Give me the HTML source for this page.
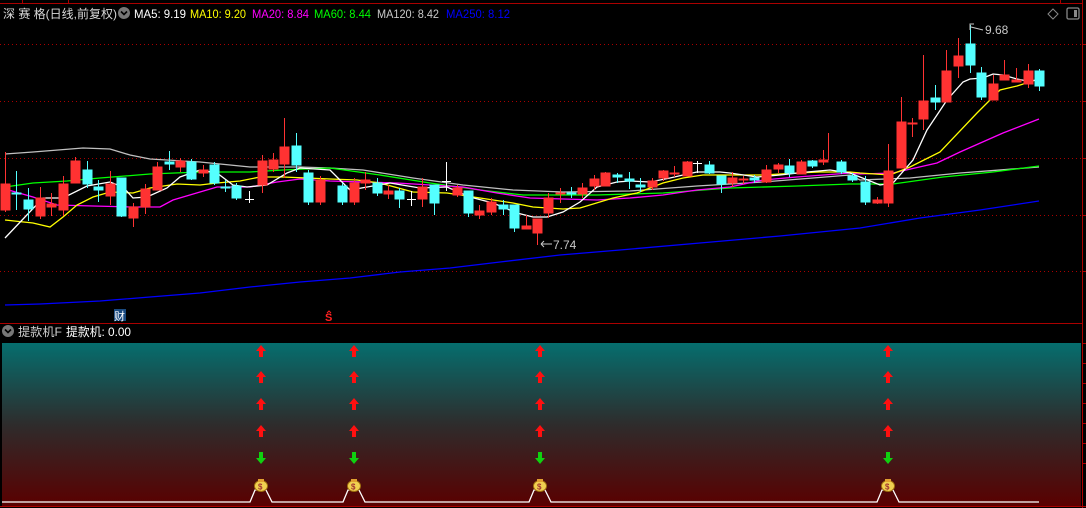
<!DOCTYPE html>
<html><head><meta charset="utf-8"><style>
html,body{margin:0;padding:0;background:#000;width:1086px;height:508px;overflow:hidden}
svg{display:block}
text{font-family:"Liberation Sans","Noto Sans CJK SC",sans-serif}
</style></head><body>
<svg width="1086" height="508" viewBox="0 0 1086 508" xmlns="http://www.w3.org/2000/svg">
<defs>
<linearGradient id="g" x1="0" y1="0" x2="0" y2="1">
<stop offset="0" stop-color="#056e6e"/>
<stop offset="0.5" stop-color="#2e2c2c"/>
<stop offset="1" stop-color="#5a0000"/>
</linearGradient>
</defs>
<rect width="1086" height="508" fill="#000"/>
<!-- frame -->
<line x1="0" y1="3.5" x2="1082" y2="3.5" stroke="#a00" stroke-width="1"/>
<line x1="22.5" y1="0" x2="22.5" y2="3" stroke="#a00"/>
<line x1="68.5" y1="0" x2="68.5" y2="3" stroke="#a00"/>
<line x1="1060.5" y1="0" x2="1060.5" y2="3" stroke="#a00"/>
<line x1="1082.5" y1="0" x2="1082.5" y2="508" stroke="#a00"/>
<line x1="0" y1="323.5" x2="1082" y2="323.5" stroke="#a00"/>
<line x1="0" y1="506.5" x2="1086" y2="506.5" stroke="#a00"/>
<g stroke="#a00" stroke-dasharray="1,3">
<line x1="0" y1="44.5" x2="1082" y2="44.5"/>
<line x1="0" y1="101.5" x2="1082" y2="101.5"/>
<line x1="0" y1="158.5" x2="1082" y2="158.5"/>
<line x1="0" y1="215.5" x2="1082" y2="215.5"/>
<line x1="0" y1="271.5" x2="1082" y2="271.5"/>
</g>
<g stroke="#a00">
<line x1="1082" y1="44.5" x2="1086" y2="44.5"/><line x1="1082" y1="101.5" x2="1086" y2="101.5"/><line x1="1082" y1="158.5" x2="1086" y2="158.5"/><line x1="1082" y1="215.5" x2="1086" y2="215.5"/><line x1="1082" y1="271.5" x2="1086" y2="271.5"/>
<line x1="1082" y1="343.5" x2="1086" y2="343.5"/><line x1="1082" y1="363.5" x2="1086" y2="363.5"/><line x1="1082" y1="383.5" x2="1086" y2="383.5"/><line x1="1082" y1="403.5" x2="1086" y2="403.5"/><line x1="1082" y1="423.5" x2="1086" y2="423.5"/><line x1="1082" y1="443.5" x2="1086" y2="443.5"/><line x1="1082" y1="463.5" x2="1086" y2="463.5"/>
</g>

<!-- header -->
<text x="3" y="18" font-size="12" fill="#d8d8d8" textLength="114" lengthAdjust="spacingAndGlyphs">深 赛 格(日线,前复权)</text>
<circle cx="124" cy="13" r="6" fill="#777"/>
<path d="M121 11.5 L124 14.5 L127 11.5" stroke="#000" stroke-width="1.6" fill="none"/>
<g font-size="12">
<text x="134" y="18" fill="#fff" textLength="52" lengthAdjust="spacingAndGlyphs">MA5: 9.19</text>
<text x="190" y="18" fill="#ffff00" textLength="56" lengthAdjust="spacingAndGlyphs">MA10: 9.20</text>
<text x="252" y="18" fill="#ff00ff" textLength="57" lengthAdjust="spacingAndGlyphs">MA20: 8.84</text>
<text x="314" y="18" fill="#00ff00" textLength="57" lengthAdjust="spacingAndGlyphs">MA60: 8.44</text>
<text x="377" y="18" fill="#c8c8c8" textLength="62" lengthAdjust="spacingAndGlyphs">MA120: 8.42</text>
<text x="446" y="18" fill="#0000ff" textLength="64" lengthAdjust="spacingAndGlyphs">MA250: 8.12</text>
</g>
<path d="M1053 9 L1058 14 L1053 19 L1048 14 Z" stroke="#888" fill="none"/>
<rect x="1067" y="8" width="12" height="11" rx="1.5" stroke="#888" fill="none" stroke-width="1.3"/>
<rect x="1074" y="10" width="3" height="7" fill="#888"/>

<!-- MA lines -->
<g fill="none" stroke-width="1.3">
<polyline stroke="#0000ff" points="5,305 40,304 100,301 150,297 200,293 250,287 300,282 350,278 400,272 450,268 500,262 560,255 620,250 700,243 780,236 860,228 920,218 980,210 1039,201"/>
<polyline stroke="#c0c0c0" points="5,154 33,152 83,148 110,149 130,155 150,159 200,162 250,167 300,167 330,168 363,170 413,178 463,185 513,190 563,192 630,191 697,186 763,182 850,175 860,180 910,178 960,173 1039,167"/>
<polyline stroke="#00ff00" points="5,187 33,183 67,181 100,178 150,174 200,172 250,172 283,170 330,168 380,175 430,183 480,190 523,195 597,195 663,193 730,188 797,186 850,184 860,184 893,184 943,177 993,172 1039,166"/>
<polyline stroke="#ff00ff" points="5,189 33,197 57,205 93,206 133,207 160,207 173,200 200,192 217,187 250,187 277,182 300,179 330,181 363,182 397,183 463,187 497,193 530,198 597,200 630,198 663,195 697,190 730,187 763,180 797,177 850,173 860,174 893,173 937,163 960,152 1003,133 1039,119"/>
<polyline stroke="#ffff00" points="5,220 33,223 50,227 63,217 77,205 93,197 110,192 133,193 150,188 177,184 200,185 217,183 240,181 260,177 283,177 330,179 357,180 380,183 413,192 447,193 480,198 513,203 533,207 563,209 580,208 613,198 637,193 663,183 683,178 703,175 730,175 763,175 797,173 820,172 850,172 860,173 890,175 910,167 940,152 977,113 1000,90 1017,86 1039,79"/>
<polyline stroke="#ffffff" points="5,238 43,198 63,198 87,186 110,182 123,187 133,198 147,197 167,188 180,177 200,170 217,173 233,185 247,187 267,185 287,173 300,168 330,170 350,190 390,183 420,188 447,187 470,197 493,203 517,213 533,217 547,217 563,212 580,202 597,187 617,182 630,181 650,182 670,178 683,175 697,172 720,172 730,173 757,177 780,175 807,172 830,170 850,173 860,177 880,185 893,183 913,160 927,130 947,100 963,82 970,79 983,78 993,74 1003,75 1017,79 1027,81 1038,80"/>
</g>

<!-- candles -->
<g stroke-width="1">
<g stroke="#ff3232" fill="#ff3232">
<line x1="5.5" y1="152" x2="5.5" y2="212"/><rect x="1" y="184" width="9" height="26"/>
<line x1="40.5" y1="187" x2="40.5" y2="219"/><rect x="36" y="198" width="9" height="18"/>
<line x1="51.5" y1="193" x2="51.5" y2="216"/><rect x="47" y="204" width="9" height="3"/>
<line x1="63.5" y1="176" x2="63.5" y2="216"/><rect x="59" y="184" width="9" height="26"/>
<line x1="75.5" y1="157" x2="75.5" y2="183"/><rect x="71" y="161" width="9" height="22"/>
<line x1="110.5" y1="171" x2="110.5" y2="205"/><rect x="106" y="184" width="9" height="12"/>
<line x1="133.5" y1="203" x2="133.5" y2="227"/><rect x="129" y="207" width="9" height="11"/>
<line x1="145.5" y1="184" x2="145.5" y2="214"/><rect x="141" y="189" width="9" height="18"/>
<line x1="157.5" y1="162" x2="157.5" y2="190"/><rect x="153" y="167" width="9" height="23"/>
<line x1="180.5" y1="158" x2="180.5" y2="172"/><rect x="176" y="161" width="9" height="6"/>
<line x1="203.5" y1="165" x2="203.5" y2="177"/><rect x="199" y="170" width="9" height="3"/>
<line x1="262.5" y1="155" x2="262.5" y2="193"/><rect x="258" y="161" width="9" height="24"/>
<line x1="273.5" y1="153" x2="273.5" y2="172"/><rect x="269" y="160" width="9" height="9"/>
<line x1="284.5" y1="118" x2="284.5" y2="178"/><rect x="280" y="147" width="9" height="17"/>
<line x1="320.5" y1="176" x2="320.5" y2="205"/><rect x="316" y="180" width="9" height="22"/>
<line x1="354.5" y1="178" x2="354.5" y2="205"/><rect x="350" y="183" width="9" height="19"/>
<line x1="365.5" y1="172" x2="365.5" y2="190"/><rect x="361" y="180" width="9" height="3"/>
<line x1="388.5" y1="185" x2="388.5" y2="199"/><rect x="384" y="191" width="9" height="3"/>
<line x1="422.5" y1="178" x2="422.5" y2="207"/><rect x="418" y="187" width="9" height="12"/>
<line x1="457.5" y1="185" x2="457.5" y2="197"/><rect x="453" y="188" width="9" height="7"/>
<line x1="479.5" y1="205" x2="479.5" y2="219"/><rect x="475" y="211" width="9" height="4"/>
<line x1="491.5" y1="198" x2="491.5" y2="215"/><rect x="487" y="202" width="9" height="10"/>
<line x1="526.5" y1="215" x2="526.5" y2="229"/><rect x="522" y="226" width="9" height="3"/>
<line x1="537.5" y1="219" x2="537.5" y2="245"/><rect x="533" y="219" width="9" height="14"/>
<line x1="548.5" y1="193" x2="548.5" y2="218"/><rect x="544" y="198" width="9" height="15"/>
<line x1="560.5" y1="188" x2="560.5" y2="203"/><rect x="556" y="193" width="9" height="1"/>
<line x1="582.5" y1="183" x2="582.5" y2="198"/><rect x="578" y="188" width="9" height="6"/>
<line x1="594.5" y1="175" x2="594.5" y2="190"/><rect x="590" y="179" width="9" height="7"/>
<line x1="605.5" y1="172" x2="605.5" y2="186"/><rect x="601" y="173" width="9" height="13"/>
<line x1="652.5" y1="178" x2="652.5" y2="190"/><rect x="648" y="181" width="9" height="6"/>
<line x1="663.5" y1="170" x2="663.5" y2="181"/><rect x="659" y="171" width="9" height="7"/>
<line x1="674.5" y1="166" x2="674.5" y2="177"/><rect x="670" y="173" width="9" height="1"/>
<line x1="687.5" y1="161" x2="687.5" y2="176"/><rect x="683" y="162" width="9" height="14"/>
<line x1="732.5" y1="172" x2="732.5" y2="187"/><rect x="728" y="178" width="9" height="5"/>
<line x1="743.5" y1="176" x2="743.5" y2="184"/><rect x="739" y="179" width="9" height="1"/>
<line x1="766.5" y1="165" x2="766.5" y2="183"/><rect x="762" y="170" width="9" height="12"/>
<line x1="778.5" y1="163" x2="778.5" y2="173"/><rect x="774" y="165" width="9" height="4"/>
<line x1="801.5" y1="160" x2="801.5" y2="174"/><rect x="797" y="162" width="9" height="12"/>
<line x1="823.5" y1="150" x2="823.5" y2="165"/><rect x="819" y="160" width="9" height="2"/>
<line x1="828.5" y1="133" x2="828.5" y2="160"/>
<line x1="877.5" y1="197" x2="877.5" y2="204"/><rect x="873" y="200" width="9" height="3"/>
<line x1="888.5" y1="144" x2="888.5" y2="207"/><rect x="884" y="171" width="9" height="32"/>
<line x1="901.5" y1="97" x2="901.5" y2="168"/><rect x="897" y="122" width="9" height="46"/>
<line x1="912.5" y1="118" x2="912.5" y2="137"/><rect x="908" y="123" width="9" height="1"/>
<line x1="923.5" y1="55" x2="923.5" y2="130"/><rect x="919" y="101" width="9" height="18"/>
<line x1="946.5" y1="50" x2="946.5" y2="102"/><rect x="942" y="71" width="9" height="31"/>
<line x1="958.5" y1="38" x2="958.5" y2="78"/><rect x="954" y="56" width="9" height="10"/>
<line x1="993.5" y1="75" x2="993.5" y2="100"/><rect x="989" y="84" width="9" height="16"/>
<line x1="1004.5" y1="60" x2="1004.5" y2="80"/><rect x="1000" y="75" width="9" height="5"/>
<line x1="1016.5" y1="68" x2="1016.5" y2="82"/><rect x="1012" y="80" width="9" height="2"/>
<line x1="1028.5" y1="64" x2="1028.5" y2="88"/><rect x="1024" y="71" width="9" height="13"/>
</g>
<g stroke="#54ffff" fill="#54ffff">
<line x1="16.5" y1="171" x2="16.5" y2="210"/><rect x="12" y="193" width="9" height="1"/>
<line x1="28.5" y1="188" x2="28.5" y2="221"/><rect x="24" y="200" width="9" height="9"/>
<line x1="87.5" y1="161" x2="87.5" y2="188"/><rect x="83" y="170" width="9" height="14"/>
<line x1="98.5" y1="180" x2="98.5" y2="202"/><rect x="94" y="187" width="9" height="3"/>
<line x1="121.5" y1="178" x2="121.5" y2="217"/><rect x="117" y="178" width="9" height="38"/>
<line x1="169.5" y1="151" x2="169.5" y2="170"/><rect x="165" y="162" width="9" height="2"/>
<line x1="191.5" y1="159" x2="191.5" y2="180"/><rect x="187" y="162" width="9" height="17"/>
<line x1="214.5" y1="162" x2="214.5" y2="185"/><rect x="210" y="165" width="9" height="18"/>
<line x1="225.5" y1="180" x2="225.5" y2="192"/><rect x="221" y="187" width="9" height="1"/>
<line x1="236.5" y1="183" x2="236.5" y2="200"/><rect x="232" y="186" width="9" height="12"/>
<line x1="296.5" y1="133" x2="296.5" y2="172"/><rect x="292" y="146" width="9" height="19"/>
<line x1="308.5" y1="170" x2="308.5" y2="205"/><rect x="304" y="173" width="9" height="29"/>
<line x1="342.5" y1="183" x2="342.5" y2="205"/><rect x="338" y="186" width="9" height="16"/>
<line x1="377.5" y1="178" x2="377.5" y2="196"/><rect x="373" y="183" width="9" height="10"/>
<line x1="399.5" y1="188" x2="399.5" y2="208"/><rect x="395" y="191" width="9" height="8"/>
<line x1="434.5" y1="185" x2="434.5" y2="215"/><rect x="430" y="185" width="9" height="18"/>
<line x1="468.5" y1="191" x2="468.5" y2="217"/><rect x="464" y="191" width="9" height="22"/>
<line x1="503.5" y1="200" x2="503.5" y2="215"/><rect x="499" y="205" width="9" height="4"/>
<line x1="514.5" y1="205" x2="514.5" y2="232"/><rect x="510" y="205" width="9" height="23"/>
<line x1="571.5" y1="187" x2="571.5" y2="198"/><rect x="567" y="193" width="9" height="1"/>
<line x1="617.5" y1="173" x2="617.5" y2="183"/><rect x="613" y="175" width="9" height="2"/>
<line x1="629.5" y1="172" x2="629.5" y2="189"/><rect x="625" y="179" width="9" height="2"/>
<line x1="640.5" y1="178" x2="640.5" y2="192"/><rect x="636" y="185" width="9" height="2"/>
<line x1="709.5" y1="161" x2="709.5" y2="174"/><rect x="705" y="165" width="9" height="8"/>
<line x1="721.5" y1="176" x2="721.5" y2="193"/><rect x="717" y="176" width="9" height="8"/>
<line x1="754.5" y1="175" x2="754.5" y2="183"/><rect x="750" y="178" width="9" height="2"/>
<line x1="789.5" y1="159" x2="789.5" y2="177"/><rect x="785" y="166" width="9" height="7"/>
<line x1="812.5" y1="160" x2="812.5" y2="168"/><rect x="808" y="161" width="9" height="5"/>
<line x1="841.5" y1="160" x2="841.5" y2="174"/><rect x="837" y="162" width="9" height="10"/>
<line x1="852.5" y1="173" x2="852.5" y2="182"/><rect x="848" y="176" width="9" height="4"/>
<line x1="865.5" y1="176" x2="865.5" y2="205"/><rect x="861" y="182" width="9" height="20"/>
<line x1="935.5" y1="85" x2="935.5" y2="110"/><rect x="931" y="98" width="9" height="4"/>
<line x1="970.5" y1="25" x2="970.5" y2="73"/><rect x="966" y="44" width="9" height="21"/>
<line x1="981.5" y1="67" x2="981.5" y2="100"/><rect x="977" y="73" width="9" height="24"/>
<line x1="1039.5" y1="69" x2="1039.5" y2="91"/><rect x="1035" y="71" width="9" height="15"/>
</g>
<g stroke="#fff">
<line x1="249.5" y1="191" x2="249.5" y2="203"/><line x1="245" y1="199.5" x2="254" y2="199.5"/>
<line x1="411.5" y1="191" x2="411.5" y2="206"/><line x1="407" y1="199.5" x2="416" y2="199.5"/>
<line x1="446.5" y1="162" x2="446.5" y2="191"/><line x1="442" y1="181.5" x2="451" y2="181.5"/>
<line x1="697.5" y1="161" x2="697.5" y2="173"/><line x1="693" y1="163.5" x2="702" y2="163.5"/>
</g>
</g>

<!-- extreme labels -->
<path d="M970 30 L970 24 L974 24 M971 27 L983 30" stroke="#c8c8c8" fill="none"/>
<text x="985" y="34" font-size="12" fill="#c8c8c8">9.68</text>
<path d="M541 244 L552 244 M541 244 L544 241 M541 244 L544 247" stroke="#c8c8c8" fill="none"/>
<text x="553" y="249" font-size="12" fill="#c8c8c8">7.74</text>

<!-- markers -->
<rect x="114" y="309" width="12" height="12" fill="#1a4a80"/>
<text x="114" y="320" font-size="11" fill="#fff">财</text>
<text x="325" y="321" font-size="11" font-weight="bold" fill="#ff2020">S</text>
<path d="M327 313 L329 311 L331 313" stroke="#ff2020" fill="none"/>

<!-- lower panel -->
<circle cx="8" cy="331" r="6" fill="#777"/>
<path d="M5 329.5 L8 332.5 L11 329.5" stroke="#000" stroke-width="1.6" fill="none"/>
<text x="18" y="336" font-size="12" fill="#d0d0d0" textLength="44" lengthAdjust="spacingAndGlyphs">提款机F</text>
<text x="66" y="336" font-size="12" fill="#fff" textLength="65" lengthAdjust="spacingAndGlyphs">提款机: 0.00</text>
<rect x="2" y="343" width="1079" height="163" fill="url(#g)"/>

<g fill="#ff1010">
<path d="M261 345l5 6h-3v6h-4v-6h-3z M261 371l5 6h-3v6h-4v-6h-3z M261 398l5 6h-3v6h-4v-6h-3z M261 425l5 6h-3v6h-4v-6h-3z"/>
<path d="M354 345l5 6h-3v6h-4v-6h-3z M354 371l5 6h-3v6h-4v-6h-3z M354 398l5 6h-3v6h-4v-6h-3z M354 425l5 6h-3v6h-4v-6h-3z"/>
<path d="M540 345l5 6h-3v6h-4v-6h-3z M540 371l5 6h-3v6h-4v-6h-3z M540 398l5 6h-3v6h-4v-6h-3z M540 425l5 6h-3v6h-4v-6h-3z"/>
<path d="M888 345l5 6h-3v6h-4v-6h-3z M888 371l5 6h-3v6h-4v-6h-3z M888 398l5 6h-3v6h-4v-6h-3z M888 425l5 6h-3v6h-4v-6h-3z"/>
</g>
<g fill="#10d010">
<path d="M261 464l5-6h-3v-6h-4v6h-3z M354 464l5-6h-3v-6h-4v6h-3z M540 464l5-6h-3v-6h-4v6h-3z M888 464l5-6h-3v-6h-4v6h-3z"/>
</g>
<polyline fill="none" stroke="#fff" stroke-width="1.3" points="2,502 250,502 255,490 266,490 272,502 343,502 348,490 359,490 365,502 529,502 534,490 545,490 551,502 877,502 882,490 893,490 899,502 1039,502"/>
<g>
<g transform="translate(261,485)"><ellipse cx="0" cy="1" rx="6.5" ry="5.5" fill="#f0d050" stroke="#a07010"/><rect x="-3" y="-6" width="6" height="3" fill="#e0a030"/><text x="-3" y="4.5" font-size="8" fill="#a03030" font-weight="bold">$</text></g>
<g transform="translate(354,485)"><ellipse cx="0" cy="1" rx="6.5" ry="5.5" fill="#f0d050" stroke="#a07010"/><rect x="-3" y="-6" width="6" height="3" fill="#e0a030"/><text x="-3" y="4.5" font-size="8" fill="#a03030" font-weight="bold">$</text></g>
<g transform="translate(540,485)"><ellipse cx="0" cy="1" rx="6.5" ry="5.5" fill="#f0d050" stroke="#a07010"/><rect x="-3" y="-6" width="6" height="3" fill="#e0a030"/><text x="-3" y="4.5" font-size="8" fill="#a03030" font-weight="bold">$</text></g>
<g transform="translate(888,485)"><ellipse cx="0" cy="1" rx="6.5" ry="5.5" fill="#f0d050" stroke="#a07010"/><rect x="-3" y="-6" width="6" height="3" fill="#e0a030"/><text x="-3" y="4.5" font-size="8" fill="#a03030" font-weight="bold">$</text></g>
</g>
</svg>
</body></html>
